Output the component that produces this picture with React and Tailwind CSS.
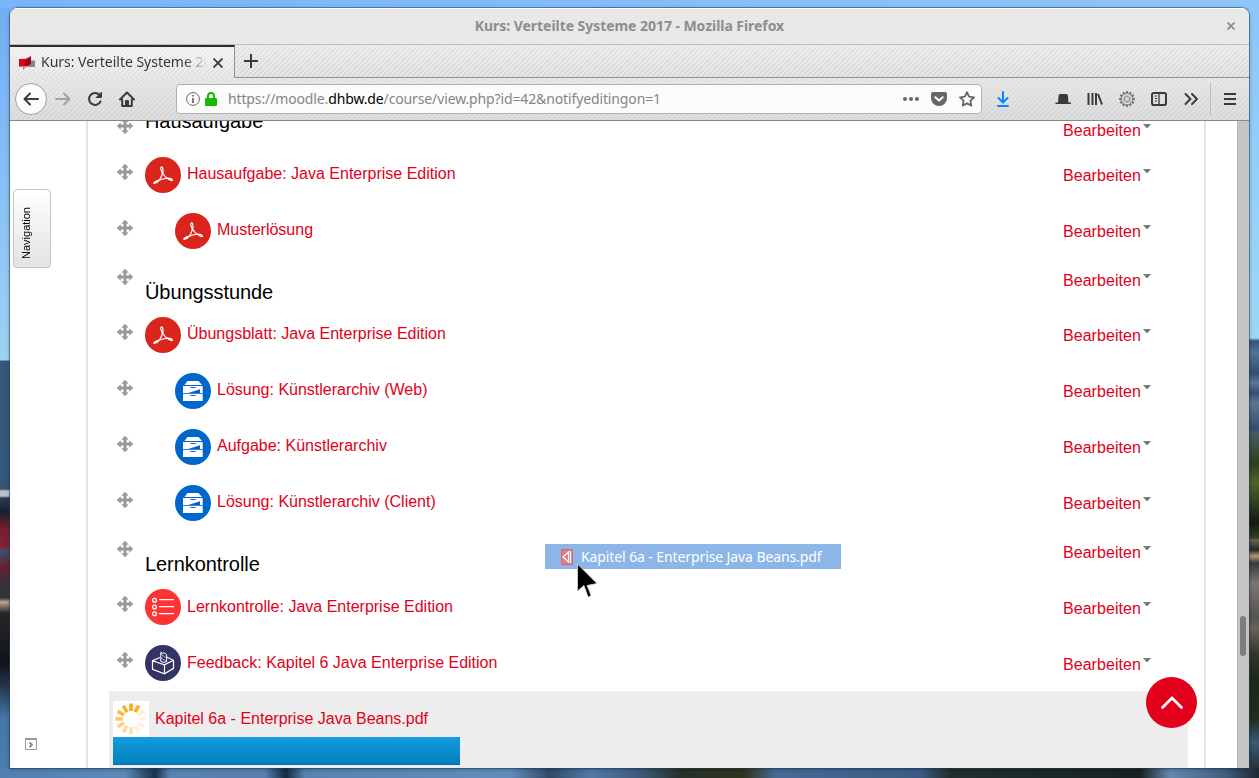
import React from 'react';

const items = [
  { kind: 'pdf', text: 'Hausaufgabe: Java Enterprise Edition' },
  { kind: 'pdf', text: 'Musterlösung', indent: true },
  { kind: 'heading', text: 'Übungsstunde' },
  { kind: 'pdf', text: 'Übungsblatt: Java Enterprise Edition' },
  { kind: 'archive', text: 'Lösung: Künstlerarchiv (Web)', indent: true },
  { kind: 'archive', text: 'Aufgabe: Künstlerarchiv', indent: true },
  { kind: 'archive', text: 'Lösung: Künstlerarchiv (Client)', indent: true },
  { kind: 'heading', text: 'Lernkontrolle' },
  { kind: 'quiz', text: 'Lernkontrolle: Java Enterprise Edition', low: true },
  { kind: 'feedback', text: 'Feedback: Kapitel 6 Java Enterprise Edition', low: true },
];

function MoveIcon({ className = '' }) {
  return (
    <svg viewBox="0 0 16 16" className={`w-4 h-4 shrink-0 ${className}`} fill="#999">
      <path d="M8 0l3.200 3.600H9.200v3.200h3.200V4.800L16 8l-3.600 3.200V9.200H9.200v3.200h2L8 16l-3.200-3.600h2V9.200H3.600v2L0 8l3.600-3.200v2h3.200V3.600h-2z" stroke="#999" strokeWidth=".5" />
    </svg>
  );
}

function Edit({ className = '' }) {
  return (
    <div className={`flex w-[125px] shrink-0 items-start text-[#e2001a] ${className}`}>
      <span className="leading-5 w-20 tracking-[0.05px]">Bearbeiten</span>
      <svg viewBox="0 0 8 4" className="w-2 h-1 mt-[3px]"><path d="M0 0h8L4.500 4h-1z" fill="#777" /></svg>
    </div>
  );
}

function ActivityIcon({ kind }) {
  if (kind === 'pdf')
    return (
      <svg viewBox="0 0 36 36" className="w-9 h-9 shrink-0" fill="none">
        <circle cx="18" cy="18" r="18" fill="#da251c" />
        <path d="M16.700 9.800c-1.500.4-1 2.400-.2 4l.9 2.900c-.8 2.500-1.900 4.600-3 6.400-2.300.8-5.600 1.700-5.700 3 .9.700 3.800-.6 5.500-3 2.500-.9 4.900-1.500 7.700-2 2 1.500 4.500 3.200 5.500 2.300.5-1.500-2.100-2.300-5.100-2.200-1.900-1.300-3.400-2.900-4.400-4.700.2-2.500.2-6.600-1.200-6.700z" stroke="#fff" strokeWidth="1.200" />
      </svg>
    );
  if (kind === 'archive')
    return (
      <svg viewBox="0 0 36 36" className="w-9 h-9 shrink-0">
        <circle cx="18" cy="18" r="18" fill="#06c" />
        <path d="M12.500 8h11l3.500 4H9.500zM8 13h19.700v7.300H8zM8 21h19.700v7H8z" fill="#fff" />
        <path d="M15.500 14h5v1.100h-5zM15.500 22h5v1.100h-5zM12.500 20.300l12.500-4v4z" fill="#06c" />
      </svg>
    );
  if (kind === 'quiz')
    return (
      <svg viewBox="0 0 36 36" className="w-9 h-9 shrink-0" fill="none" stroke="#fff" strokeWidth="1.300">
        <circle cx="18" cy="18" r="18" fill="#f33" stroke="none" />
        <circle cx="9.500" cy="11.200" r="1.900" />
        <circle cx="9.500" cy="18" r="1.900" />
        <circle cx="9.500" cy="24.800" r="1.900" />
        <path d="M14 10.700h15M14 17.700h15M14 24.700h15" strokeWidth="1.200" />
      </svg>
    );
  return (
    <svg viewBox="0 0 36 36" className="w-9 h-9 shrink-0" fill="none" stroke="#fff" strokeWidth="1.200">
      <circle cx="18" cy="18" r="18" fill="#336" stroke="none" />
      <path d="M15 12.500L7.500 15.700v8.600l12 4.500 9-5.500v-8L22 12.200M7.500 15.700l12 4.200 9-4.600M19.500 19.900v8.700" />
      <path d="M15.800 16.500V7.200l2 1.300 1.200-.8 2.600 2v7l-2.800.7z" strokeWidth="1" />
      <path d="M15.800 9l5.500 4M16 13l5.500 3.500" strokeWidth=".6" />
    </svg>
  );
}

function Row({ kind, text, indent, low }) {
  if (kind === 'heading')
    return (
      <div className="flex h-12 items-start pl-[29px]">
        <MoveIcon className="mt-[10px]" />
        <div className="ml-3 mt-[21px] grow text-[20px] leading-6 tracking-[-0.07px] text-black">{text}</div>
        <Edit className="mt-3 mr-[16px]" />
      </div>
    );
  return (
    <div className="flex h-14 items-start pl-[29px]">
      <MoveIcon className="mt-[17px]" />
      <div className={`flex grow items-start pt-[10px] ${indent ? 'ml-[42px]' : 'ml-3'}`}>
        <ActivityIcon kind={kind} />
        <span className={`ml-[6px] leading-5 text-[#e2001a] ${low ? 'mt-2' : 'mt-[7px]'}`}>{text}</span>
      </div>
      <Edit className={`mr-[16px] ${low ? 'mt-5' : 'mt-[19px]'}`} />
    </div>
  );
}

function Icon({ children, color = '#3b3b3b' }) {
  return (
    <div className="flex w-8 h-8 shrink-0 items-center justify-center">
      <svg viewBox="0 0 16 16" className="w-4 h-4" fill="none" stroke={color} strokeWidth="2" strokeLinecap="round" strokeLinejoin="round">
        {children}
      </svg>
    </div>
  );
}

const tabStripes = 'bg-[repeating-linear-gradient(135deg,rgba(255,255,255,0.7)_0px,rgba(255,255,255,0.7)_0.8px,transparent_1px,transparent_3.536px)]';
const navStripes = 'bg-[repeating-linear-gradient(135deg,rgba(255,255,255,0.4)_0px,rgba(255,255,255,0.4)_0.8px,transparent_1px,transparent_3.536px)]';
const teeth = [0, 30, 60, 90, 120, 150, 180, 210, 240, 270, 300, 330];

function Chrome() {
  return (
    <div className="shrink-0 font-['Noto_Sans','Open_Sans',sans-serif]">
      <div className="flex h-[37px] items-center border-t border-t-white border-b border-b-[#bcbeb8] bg-[#e8e8e6] pb-px text-[14px] font-bold text-[#8b8e8f]">
        <div className="w-9" />
        <div className="-mt-px grow text-center tracking-[-0.05px]">Kurs: Verteilte Systeme 2017 - Mozilla Firefox</div>
        <div className="flex w-9 justify-center">
          <svg viewBox="0 0 8 8" className="w-2 h-2" stroke="#8b8e8f" strokeWidth="1.800"><path d="M.5.500l7 7M7.500.500l-7 7" /></svg>
        </div>
      </div>
      <div className="bg-linear-to-b from-[#e6e6e6] to-[#dadada]">
        <div className={tabStripes}>
          <div className="flex h-[33px]">
            <div className="flex w-[225px] items-center border-t-2 border-r border-t-[#2b2b2b] border-r-[#929292] bg-linear-to-b from-white/40 to-white/20 pl-[9px]">
              <svg viewBox="0 0 16 14" className="w-4 h-[14px]">
                <path d="M9 4.500h7v6.500h-6l-3-1z" fill="#7e8990" />
                <path d="M0 3l7-.3L12 0v8l-4 2.500H0z" fill="#e2001a" />
                <path d="M7.500 3.500L12 1.500V8L8 10l-3-1z" fill="#8d0c18" /><path d="M4 11h2.500l-2.500 3z" fill="#7e8990" />
              </svg>
              <div className="ml-[6px] mb-[2px] w-[166px] overflow-hidden whitespace-nowrap bg-linear-to-r from-[#333] from-86% to-transparent bg-clip-text text-[14px] tracking-[-0.02px] text-transparent">Kurs: Verteilte Systeme 2017</div>
              <svg viewBox="0 0 10 10" className="w-[10px] h-[10px] ml-[6px]" stroke="#3b3b3b" strokeWidth="1.800"><path d="M.5.500l9 9M9.500.500l-9 9" /></svg>
            </div>
            <div className="flex grow items-center border-b border-b-[#929292] pl-[9px]">
              <svg viewBox="0 0 14 14" className="w-[14px] h-[14px]" stroke="#3b3b3b" strokeWidth="2"><path d="M7 0v14M0 7h14" /></svg>
            </div>
          </div>
        </div>
      </div>
      <div className="border-b border-b-[#888] bg-linear-to-b from-[#e4e4e4] to-[#d6d6d6]">
        <div className={`flex h-[42px] items-center pl-[5px] ${navStripes}`}>
          <div className="flex w-8 h-8 items-center justify-center rounded-full border border-[#a0a0a0] bg-[#fcfcfc]">
            <Icon><path d="M15 8H1.500M7 2.500L1.500 8 7 13.500" /></Icon>
          </div>
          <Icon color="#a3a3a3"><path d="M1 8h13.500M9 2.500L14.500 8 9 13.500" /></Icon>
          <Icon><path d="M12.600 4A6 6 0 1 0 13.500 10.500" /><path d="M14.500 1.500v5h-5z" fill="#3b3b3b" strokeWidth="1" /></Icon>
          <Icon><path d="M1 8.500L8 1.500l7 7M3.200 8.500V15h9.600V8.500" /><path d="M6.500 14v-4.500h3V14z" fill="#3b3b3b" strokeWidth="1" /></Icon>
          <div className="ml-[33px] flex h-[30px] w-[806px] items-center rounded-[4px] border border-[#b0b0b0] bg-[#fcfcfc] pl-[9px]">
            <svg viewBox="0 0 14 14" className="w-[14px] h-[14px]" fill="none" stroke="#666" strokeWidth="1"><circle cx="7" cy="7" r="6.400" /><path d="M7 6v5M7 3v1.600" strokeWidth="1.700" /></svg>
            <svg viewBox="0 0 12 14" className="ml-[5px] w-3 h-[14px]"><path d="M3 7V4a3 3 0 0 1 6 0v3" fill="none" stroke="#12bc00" strokeWidth="2" /><rect y="6" width="12" height="8" rx="1" fill="#12bc00" /></svg>
            <div className="ml-[11px] mb-[2px] grow whitespace-nowrap text-[14px] tracking-[-0.13px] text-[#858585]">https://moodle.<span className="text-black">dhbw.de</span>/course/view.php?id=42&amp;notifyeditingon=1</div>
            <div className="flex">
              <div className="flex w-7 items-center justify-center">
                <svg viewBox="0 0 16 4" className="w-4 h-1" fill="#666"><circle cx="2" cy="2" r="2" /><circle cx="8" cy="2" r="2" /><circle cx="14" cy="2" r="2" /></svg>
              </div>
              <div className="flex w-7 items-center justify-center">
                <svg viewBox="0 0 16 14" className="w-4 h-[14px]"><path d="M2 0h12q2 0 2 2v4a8 8 0 0 1-16 0V2q0-2 2-2z" fill="#666" /><path d="M4.300 5.200L8 8.600l3.700-3.400" fill="none" stroke="#fff" strokeWidth="2" strokeLinecap="round" strokeLinejoin="round" /></svg>
              </div>
              <div className="flex w-7 items-center justify-center">
                <svg viewBox="0 0 16 16" className="w-4 h-4" fill="none" stroke="#666" strokeWidth="1.800" strokeLinejoin="round"><path d="M8 1.200l2.100 4.500 4.900.6-3.600 3.400.9 4.900L8 12.200l-4.300 2.400.9-4.900L1 6.300l4.900-.6z" /></svg>
              </div>
            </div>
          </div>
          <div className="ml-[5px]"><Icon color="#0a84ff"><path d="M8 1v10M3.500 7L8 11.500 12.500 7M3 15h10" /></Icon></div>
          <div className="ml-7 flex">
            <Icon><path d="M3 12L3.600 4.500q.1-1.500 1.600-1.500h6.100q1.500 0 1.600 1.500L13.500 12z" fill="#3b3b3b" stroke="none" /><path d="M1 12.300h14.500" strokeWidth="1.500" /></Icon>
            <Icon><path d="M1.500 2v12M5.500 2v12M9 2v12M11 3l4 10.500" strokeLinecap="butt" /></Icon>
            <Icon color="#777">
              <circle cx="8" cy="8" r="6" fill="#b8b8b8" strokeWidth="1" />
              {teeth.map((a) => <path key={a} d="M8 .8v1" transform={`rotate(${a} 8 8)`} />)}
              <circle cx="8" cy="8" r="4.600" stroke="#ddd" strokeWidth="1.200" />
              <circle cx="8" cy="8" r="2.600" strokeWidth="1" fill="#d5d5d5" stroke="#999" />
            </Icon>
            <Icon><rect x="1" y="2" width="14" height="12" rx="1.800" /><path d="M8 2v12" strokeWidth="1.300" /><path d="M3.500 5h2.500M4 7.500h2M4 10h2" strokeWidth="1" strokeLinecap="butt" /></Icon>
            <Icon><path d="M2.500 3l5 5-5 5M9 3l5 5-5 5" /></Icon>
          </div>
          <div className="ml-[3px] h-8 w-px bg-[#bdbdbd]" />
          <div className="ml-[3px]"><Icon><path d="M2 3h12M2 8h12M2 13h12" strokeLinecap="butt" /></Icon></div>
        </div>
      </div>
    </div>
  );
}

const spokes = [1, 0.95, 0.2, 0.1, 0.12, 0.15, 0.35, 0.45, 0.55, 0.7, 0.85, 0.95];

export default function App() {
  return (
    <div className="relative flex h-[778px] w-[1259px] flex-col overflow-hidden bg-[#83b9f5] font-['Liberation_Sans',Arial,sans-serif] text-[16px]">
      <div className="h-2 shrink-0 bg-linear-to-r from-[#7ab4fa] to-[#8ec5fa]" />
      <div className="flex h-[760px] shrink-0">
        <div className="w-[10px] bg-[linear-gradient(to_bottom,#72aef5_0px,#9ed2f4_352px,#385879_353px,#315979_470px,#35526a_481px,#b5c0c8_483px,#b5c0c8_488px,#283e50_490px,#16202b_504px,#722031_520px,#822238_540px,#35536a_542px,#681f2c_560px,#38333a_575px,#35353a_590px,#bba78c_594px,#27272b_605px,#101418_655px,#253b50_680px,#4576a8_710px,#4a7dac_760px)]" />
        <div className="z-10 flex w-[1239px] flex-col overflow-hidden rounded-t-lg bg-white shadow-[0_0_0_1px_rgba(35,65,95,0.5),0_1px_4px_rgba(0,0,0,0.35)]">
          <Chrome />
          <div className="flex h-[647px] overflow-hidden bg-white">
            <div className="flex w-[76px] flex-col justify-between pl-[3px] pt-[68px] pb-[18px]">
              <div className="flex h-[79px] w-[38px] items-center justify-start rounded-[4px] border border-[#c6c6c6] bg-linear-to-b from-white to-[#e3e3e3] pl-1 pt-[8px] shadow-xs">
                <span className="rotate-180 text-[11px] leading-4 text-black [writing-mode:vertical-rl]">Navigation</span>
              </div>
              <svg viewBox="0 0 12 12" className="ml-3 w-3 h-3" fill="none"><path d="M.5.500h11v11H.5z" stroke="#999" /><path d="M0 1h12" stroke="#999" strokeWidth="2" /><path d="M4.500 4.500L7 6.800 4.500 9" stroke="#888" strokeWidth="1.800" /></svg>
            </div>
            <div className="w-[1120px] border-x-2 border-[#e2e2e2]">
              <div className="flex h-[26px] items-start pl-[29px]">
                <MoveIcon className="-mt-[3px]" />
                <div className="-mt-[12px] ml-3 grow text-[20px] leading-6 tracking-[-0.07px] text-black">Hausaufgabe</div>
                <Edit className="mr-[16px]" />
              </div>
              {items.map((it) => <Row key={it.text} {...it} />)}
              <div className="ml-[21px] mr-4 h-[77px] bg-[#ededed] pl-1 pt-[10px]">
                <div className="flex items-start">
                  <svg viewBox="0 0 36 36" className="h-9 w-9 bg-white">
                    {spokes.map((o, i) => <path key={i} d="M18 2.500v7.500" stroke="#ffa200" strokeWidth="3.600" strokeLinecap="butt" opacity={o * 0.9} transform={`rotate(${i * 30} 18 18)`} />)}
                  </svg>
                  <span className="ml-[6px] mt-2 leading-5 text-[#e2001a]">Kapitel 6a - Enterprise Java Beans.pdf</span>
                </div>
                <div className="h-7 w-[347px] border-b border-[#0668a6] bg-linear-to-b from-[#149bdf] to-[#0480be]" />
              </div>
            </div>
            <div className="w-[31px]" />
            <div className="w-3 border-l border-[#b4b7b6] bg-[#c3c6c5] pl-[2px] pt-[495px]">
              <div className="h-10 w-[6px] rounded-full bg-[#7b7e7f]" />
            </div>
          </div>
        </div>
        <div className="w-[10px] bg-[linear-gradient(to_bottom,#8ec5fa_0px,#9bd8f5_330px,#335477_333px,#517595_345px,#314f70_365px,#5b7993_375px,#314f70_385px,#5b7993_395px,#314f70_420px,#435d60_426px,#303e20_455px,#4d642a_475px,#131a12_515px,#354025_530px,#656055_532px,#282923_542px,#b49877_548px,#35383a_555px,#7c7770_575px,#55534e_610px,#696357_620px,#34382c_645px,#1c291b_670px,#202d1d_710px,#3c5877_735px,#26333b_760px)]" />
      </div>
      <div className="h-[10px] shrink-0 bg-[linear-gradient(to_right,#4f80b3_0px,#5b8abb_125px,#17334b_155px,#5983b3_170px,#567faf_265px,#102c42_286px,#5882b0_305px,#638dbd_510px,#304b68_550px,#5279a7_590px,#3d5b7a_640px,#26302c_680px,#30341d_745px,#466b96_775px,#3b5b86_920px,#20302f_950px,#182122_1140px,#6488ae_1170px,#405e80_1225px,#1c272c_1259px)]" />
      <div className="absolute left-[1146px] top-[677px] z-20 flex h-[51px] w-[51px] items-center justify-center rounded-full bg-[#e2001a]">
        <svg viewBox="0 0 24 16" className="h-4 w-6" fill="none" stroke="#fff" strokeWidth="2.800" strokeLinecap="round"><path d="M2.500 12.500L12 3l9.500 9.500" /></svg>
      </div>
      <div className="absolute left-[545px] top-[544px] z-20 flex h-[25px] w-[296px] items-center bg-[#8bb6e7] pl-4 font-['Noto_Sans',sans-serif] text-[14px] tracking-[-0.1px] text-white">
        <svg viewBox="0 0 12 16" className="h-4 w-3"><path d="M.5.500h11v15H.5z" fill="#e57c7f" stroke="#d46a6c" /><path d="M7.500 3L2 8l5.500 5zM9.500 2v12" fill="none" stroke="#fff" strokeWidth="1.200" /></svg>
        <span className="ml-2 whitespace-nowrap">Kapitel 6a - Enterprise Java Beans.pdf</span>
      </div>
      <svg viewBox="0 0 24 36" className="absolute left-[576px] top-[562px] z-30 h-9 w-6"><path d="M1.500 2v27l6.500-5.500 4 11.500 3-1-1.500-5-2.500-5.500 10-2z" fill="#000" stroke="#ddd" strokeWidth=".8" /></svg>
    </div>
  );
}
